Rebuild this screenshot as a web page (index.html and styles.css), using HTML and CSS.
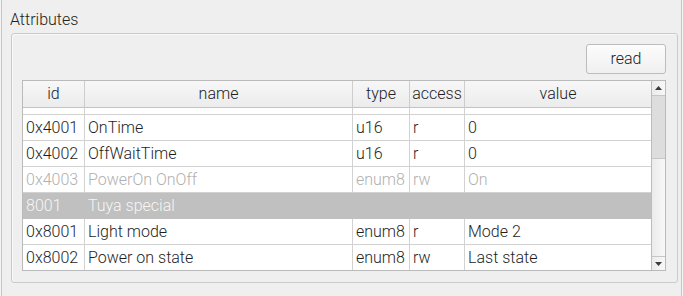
FILE: index.html
```html
<!DOCTYPE html>
<html>
<head>
<meta charset="utf-8">
<link rel="stylesheet" href="styles.css">
</head>
<body>
<div class="frame">
  <div class="title">Attributes</div>
  <div class="group">
    <div class="toolbar"><button class="btn">read</button></div>
    <div class="table">
      <div class="main">
        <div class="row head">
          <div class="c">id</div><div class="c">name</div><div class="c">type</div><div class="c">access</div><div class="c">value</div>
        </div>
        <div class="body">
          <div class="row partial"><div class="c"></div><div class="c"></div><div class="c"></div><div class="c"></div><div class="c"></div></div>
          <div class="row"><div class="c">0x4001</div><div class="c">OnTime</div><div class="c">u16</div><div class="c">r</div><div class="c">0</div></div>
          <div class="row"><div class="c">0x4002</div><div class="c">OffWaitTime</div><div class="c">u16</div><div class="c">r</div><div class="c">0</div></div>
          <div class="row disabled"><div class="c">0x4003</div><div class="c">PowerOn OnOff</div><div class="c">enum8</div><div class="c">rw</div><div class="c">On</div></div>
          <div class="row section"><div class="c">8001</div><div class="c">Tuya special</div><div class="c"></div><div class="c"></div><div class="c"></div></div>
          <div class="row"><div class="c">0x8001</div><div class="c">Light mode</div><div class="c">enum8</div><div class="c">r</div><div class="c">Mode 2</div></div>
          <div class="row"><div class="c">0x8002</div><div class="c">Power on state</div><div class="c">enum8</div><div class="c">rw</div><div class="c">Last state</div></div>
        </div>
      </div>
      <div class="scroll">
        <div class="sb-btn sb-up"><svg width="7" height="4" viewBox="0 0 7 4"><path d="M0 4 L3.5 0 L7 4 Z" fill="#3a3a3a"/></svg></div>
        <div class="sb-handle"></div>
        <div class="sb-track"></div>
        <div class="sb-btn sb-down"><svg width="7" height="4" viewBox="0 0 7 4"><path d="M0 0 L3.5 4 L7 0 Z" fill="#3a3a3a"/></svg></div>
      </div>
    </div>
  </div>
</div>
</body>
</html>
```
FILE: styles.css
```css
html, body {
  margin: 0;
  padding: 0;
}
body {
  background: #f4f4f4;
  font-family: Roboto, "Liberation Sans", sans-serif;
  font-size: 16px;
  font-weight: 300;
  color: #1e1e1e;
}
.frame {
  margin: 0 1px;
  height: 296px;
  box-sizing: border-box;
  border-left: 1px solid #c6c6c6;
  border-right: 1px solid #c6c6c6;
  background: #efefef;
  padding-top: 10px;
  overflow: hidden;
}
.title {
  padding-left: 8px;
  line-height: 19px;
  height: 19px;
  color: #222;
}
.group {
  margin: 4px 3px 0 9px;
  border: 1px solid #cacaca;
  border-radius: 3px;
  box-shadow: inset 1px 1px 0 #f8f8f8;
  padding: 10px 11px 11px 10px;
}
.toolbar {
  display: flex;
  justify-content: flex-end;
  margin-bottom: 6px;
}
.btn {
  width: 80px;
  height: 30px;
  box-sizing: border-box;
  border: 1px solid #bcbcbc;
  border-radius: 3px;
  background: linear-gradient(#fcfcfc, #f0f0f0);
  font-family: inherit;
  font-size: 16px;
  font-weight: 300;
  color: #222;
  padding: 0;
  line-height: 28px;
}
.table {
  display: flex;
  height: 191px;
  box-sizing: border-box;
  border: 1px solid #bababa;
  background: #fff;
}
.main {
  width: 628px;
  display: flex;
  flex-direction: column;
}
.row {
  display: grid;
  grid-template-columns: 62px 268px 57px 55px 186px;
  height: 26px;
  flex: none;
}
.c {
  box-sizing: border-box;
  border-right: 1px solid #d2d2d2;
  border-bottom: 1px solid #d2d2d2;
  padding-left: 3px;
  line-height: 25px;
  white-space: nowrap;
  overflow: hidden;
}
.c:last-child {
  border-right: none;
}
.head {
  height: 27px;
}
.head .c {
  background: linear-gradient(#f7f7f7, #ececec);
  border-right-color: #cdcdcd;
  border-bottom-color: #c2c2c2;
  text-align: center;
  padding-left: 0;
  line-height: 26px;
  color: #222;
}
.body {
  height: 162px;
  overflow: hidden;
}
.partial {
  height: 7px;
}
.disabled .c {
  color: #b0b0b0;
}
.section .c {
  background: #c0c0c0;
  color: #f6f6f6;
  border-right-color: #c0c0c0;
  border-bottom-color: #c0c0c0;
}
.scroll {
  width: 14px;
  box-sizing: border-box;
  border-left: 1px solid #bcbcbc;
  display: flex;
  flex-direction: column;
  background: linear-gradient(to right, #ebebeb, #f8f8f8);
}
.sb-btn {
  display: flex;
  align-items: center;
  justify-content: center;
  flex: none;
}
.sb-up {
  height: 14px;
}
.sb-handle {
  height: 64px;
  box-sizing: border-box;
  border-top: 1px solid #c6c6c6;
  border-bottom: 1px solid #c6c6c6;
  background: #dddddd;
}
.sb-track {
  flex: 1;
}
.sb-down {
  height: 13px;
  border-top: 1px solid #c6c6c6;
}
```
